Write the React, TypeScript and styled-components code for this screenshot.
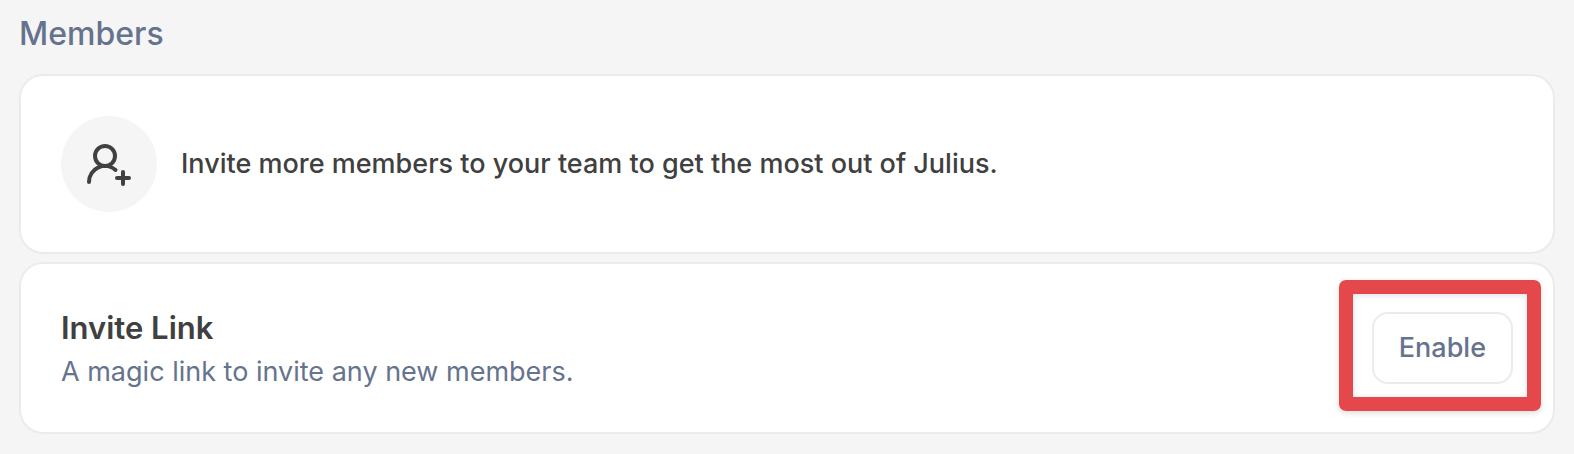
import React from "react";
import styled, { createGlobalStyle } from "styled-components";
import { UserRoundPlus } from "lucide-react";

const GlobalStyle = createGlobalStyle`
  * { box-sizing: border-box; }
  body {
    margin: 0;
    background: #f5f5f5;
    font-family: Inter, "Liberation Sans", sans-serif;
    color: #404040;
  }
`;

const Page = styled.main`
  padding: 12px 19px 20px;
`;

const Heading = styled.h1`
  margin: 0 0 18px;
  font-size: 32px;
  line-height: 44px;
  font-weight: 450;
  color: #66738e;
`;

const Cards = styled.div`
  display: flex;
  flex-direction: column;
  gap: 8px;
`;

const Card = styled.section`
  display: flex;
  align-items: center;
  gap: 24px;
  padding: 40px;
  border: 2px solid #ebebeb;
  border-radius: 24px;
  background: #fff;
`;

const Avatar = styled.div`
  display: flex;
  flex-shrink: 0;
  align-items: center;
  justify-content: center;
  width: 96px;
  height: 96px;
  border-radius: 50%;
  background: #f5f5f5;
`;

const Message = styled.p`
  margin: 0;
  font-size: 27px;
  line-height: 40px;
  font-weight: 500;
`;

const LinkCard = styled(Card)`
  align-items: flex-start;
  justify-content: space-between;
  padding: 16px 12px 20px 40px;
`;

const LinkText = styled.div`
  padding: 24px 0 20px;
`;

const Title = styled.h2`
  margin: 0;
  font-size: 31px;
  line-height: 48px;
  font-weight: 600;
`;

const Description = styled.p`
  margin: 0;
  font-size: 27px;
  line-height: 40px;
  color: #66738e;
`;

const Highlight = styled.div`
  padding: 18px 14px 13px 19px;
  border: 14px solid #e5484b;
  border-radius: 7px;
  box-shadow: 0 2px 6px rgba(0, 0, 0, 0.14), inset 0 1px 6px rgba(0, 0, 0, 0.12);
`;

const Button = styled.button`
  display: block;
  padding: 14px 25px;
  border: 2px solid #ebebeb;
  border-radius: 16px;
  background: #fff;
  color: #66738e;
  font-family: inherit;
  font-size: 27px;
  line-height: 40px;
  font-weight: 500;
`;

export default function App() {
  return (
    <Page>
      <GlobalStyle />
      <Heading>Members</Heading>
      <Cards>
        <Card>
          <Avatar>
            <UserRoundPlus size={48} strokeWidth={2} aria-hidden="true" />
          </Avatar>
          <Message>Invite more members to your team to get the most out of Julius.</Message>
        </Card>
        <LinkCard>
          <LinkText>
            <Title>Invite Link</Title>
            <Description>A magic link to invite any new members.</Description>
          </LinkText>
          <Highlight>
            <Button type="button">Enable</Button>
          </Highlight>
        </LinkCard>
      </Cards>
    </Page>
  );
}
